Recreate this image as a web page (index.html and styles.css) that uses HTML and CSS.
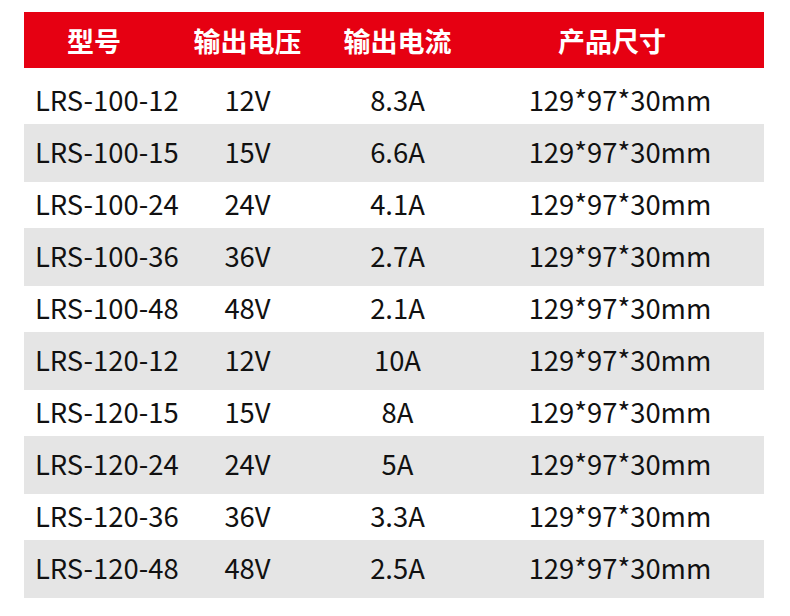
FILE: index.html
```html
<!DOCTYPE html>
<html lang="zh-CN">
<head>
<meta charset="utf-8">
<title>LRS 规格表</title>
<link rel="stylesheet" href="styles.css">
</head>
<body>
<div class="spec">
  <div class="row head">
    <div class="c c1">型号</div>
    <div class="c c2">输出电压</div>
    <div class="c c3">输出电流</div>
    <div class="c c4">产品尺寸</div>
  </div>
  <div class="row first"><div class="c c1">LRS-100-12</div><div class="c c2">12V</div><div class="c c3">8.3A</div><div class="c c4">129*97*30mm</div></div>
  <div class="row gray"><div class="c c1">LRS-100-15</div><div class="c c2">15V</div><div class="c c3">6.6A</div><div class="c c4">129*97*30mm</div></div>
  <div class="row white"><div class="c c1">LRS-100-24</div><div class="c c2">24V</div><div class="c c3">4.1A</div><div class="c c4">129*97*30mm</div></div>
  <div class="row gray"><div class="c c1">LRS-100-36</div><div class="c c2">36V</div><div class="c c3">2.7A</div><div class="c c4">129*97*30mm</div></div>
  <div class="row white"><div class="c c1">LRS-100-48</div><div class="c c2">48V</div><div class="c c3">2.1A</div><div class="c c4">129*97*30mm</div></div>
  <div class="row gray"><div class="c c1">LRS-120-12</div><div class="c c2">12V</div><div class="c c3">10A</div><div class="c c4">129*97*30mm</div></div>
  <div class="row white"><div class="c c1">LRS-120-15</div><div class="c c2">15V</div><div class="c c3">8A</div><div class="c c4">129*97*30mm</div></div>
  <div class="row gray"><div class="c c1">LRS-120-24</div><div class="c c2">24V</div><div class="c c3">5A</div><div class="c c4">129*97*30mm</div></div>
  <div class="row white"><div class="c c1">LRS-120-36</div><div class="c c2">36V</div><div class="c c3">3.3A</div><div class="c c4">129*97*30mm</div></div>
  <div class="row gray"><div class="c c1">LRS-120-48</div><div class="c c2">48V</div><div class="c c3">2.5A</div><div class="c c4">129*97*30mm</div></div>
</div>
</body>
</html>
```
FILE: styles.css
```css
html, body {
  margin: 0;
  padding: 0;
  background: #ffffff;
}
body {
  font-family: "Noto Sans CJK SC", "Noto Sans", sans-serif;
  color: #111111;
}
.spec {
  width: 740px;
  margin: 12px 0 0 24px;
  display: flex;
  flex-direction: column;
}
.row {
  display: grid;
  grid-template-columns: 146px 155px 145px 294px;
  align-items: center;
  font-size: 27.4px;
  line-height: 1;
}
.c {
  text-align: center;
  white-space: nowrap;
}
.row:not(.head) .c {
  padding-bottom: 3px;
}
.head {
  height: 56px;
  background: #e60012;
  color: #ffffff;
  font-weight: 700;
  font-size: 27px;
}
.head .c1 { padding-right: 6px; }
.head .c4 { padding-right: 10px; }
.first {
  height: 46px;
  margin-top: 10px;
  background: #ffffff;
}
.gray {
  height: 58px;
  background: #e5e5e5;
}
.white {
  height: 46px;
  background: #ffffff;
}
.row:not(.head) .c1 {
  text-align: left;
  padding-left: 11px;
}
.row:not(.head) .c4 {
  padding-left: 6px;
}
```
